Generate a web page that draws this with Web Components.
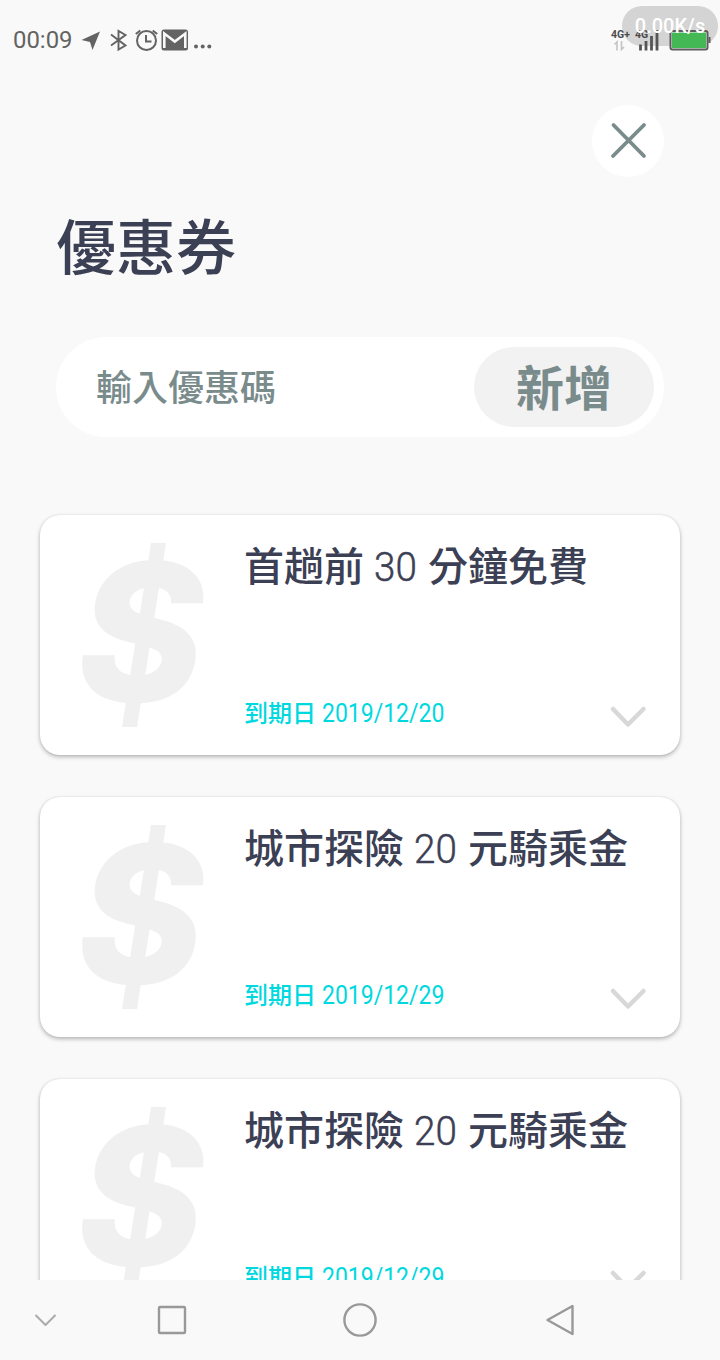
<!DOCTYPE html>
<html lang="zh-Hant">
<head>
<meta charset="utf-8">
<title>優惠券</title>
<style>
    body {
        margin: 0;
        background: #f9f9f9;
        font-family: Roboto, "Noto Sans CJK TC", sans-serif;
    }
</style>
</head>
<body>
<coupon-app></coupon-app>

<script>
// Digits set narrower than the installed face; --w is the final width, --s the squeeze
class NarrowText extends HTMLElement {

    constructor() {
        super();
        this.attachShadow({ mode: "open" }).innerHTML = `
            <style>
                :host {
                    display: inline-block;
                    width: var(--w);
                    white-space: nowrap;
                }
                span {
                    display: inline-block;
                    transform: scaleX(var(--s, 1));
                    transform-origin: left;
                }
            </style>
            <span><slot></slot></span>`;
    }
}

class StatusBar extends HTMLElement {

    constructor() {
        super();
        this.attachShadow({ mode: "open" }).innerHTML = `
            <style>
                :host {
                    display: flex;
                    justify-content: space-between;
                    position: relative;
                    height: 80px;
                    box-sizing: border-box;
                    padding: 0 9px 0 13px;
                    align-items: center;
                    color: #636363;
                }
                .left {
                    display: flex;
                    align-items: center;
                }
                svg {
                    display: block;
                    flex: none;
                }
                .time {
                    font-size: 24px;
                    line-height: 28px;
                    --w: 66px;
                    --s: .995;
                }
                .right {
                    display: flex;
                    align-items: flex-start;
                    height: 22px;
                    position: relative;
                    z-index: 1;
                }
                .net {
                    font-size: 10.5px;
                    line-height: 11px;
                    font-weight: 700;
                    color: #4c4c4c;
                    width: 24px;
                }
                .sim {
                    display: grid;
                    width: 25px;
                }
                .sim > * {
                    grid-area: 1 / 1;
                }
                .speed {
                    position: absolute;
                    left: 622px;
                    top: 6px;
                    width: 96px;
                    height: 40px;
                    border-radius: 20px;
                    background: #d4d4d4;
                }
                .rate {
                    z-index: 2;
                    background: none;
                    color: #fff;
                    font-size: 20px;
                    font-weight: 500;
                    line-height: 40px;
                    text-align: center;
                }
            </style>
            <div class="left">
                <narrow-text class="time">00:09</narrow-text>
                <svg width="126" height="28" viewBox="79 26 126 28">
                    <path d="M100 31.5L81.5 40l8.500 2 2.500 8z" fill="#636363"/>
                    <path d="M111 34.500L125.500 45.500 118.500 49.500V31L125.500 35 111 45.500" fill="none" stroke="#636363" stroke-width="1.900"/>
                    <g fill="none" stroke="#636363" stroke-width="2">
                        <circle cx="146.500" cy="40.500" r="9.500"/>
                        <path d="M146 35v6.500h5.500M135.800 34l4.500-3.500M152.700 30.500l4.500 3.500"/>
                    </g>
                    <rect x="161.500" y="29.500" width="26.500" height="21" rx="2.500" fill="#636363"/>
                    <path d="M164.300 48V33.500L174.800 41.500l10.500-8V48" fill="none" stroke="#f9f9f9" stroke-width="2.600"/>
                    <g fill="#636363">
                        <circle cx="196" cy="46.500" r="2"/>
                        <circle cx="202.700" cy="46.500" r="2"/>
                    </g>
                </svg>
                <svg width="8" height="28" viewBox="205 26 8 28">
                    <circle cx="209.300" cy="46.500" r="2" fill="#636363"/>
                </svg>
            </div>
            <div class="speed"></div>
            <div class="right">
                <div class="net">4G+
                    <svg width="14" height="11" viewBox="611 40 14 11">
                        <path d="M617 50.500V42l-2.500 2.500M621.500 41v8.500l2.500-2.500" fill="none" stroke="#c4c4c4" stroke-width="1.600"/>
                    </svg>
                </div>
                <div class="sim">
                    <svg width="25" height="22" viewBox="635 29 25 22">
                        <path d="M640.500 50.500v-6M646 50.500V41M651.500 50.500V36M657 50.500V30" fill="none" stroke="#555" stroke-width="2.800"/>
                    </svg>
                    <div class="net">4G</div>
                </div>
                <svg width="42" height="22" viewBox="669 29 42 22" style="margin-left: 9px">
                    <rect x="670.500" y="31" width="37" height="18.500" rx="2" fill="#f9f9f9" stroke="#5c5c5c" stroke-width="2"/>
                    <rect x="672" y="32.500" width="34" height="15.500" fill="#43b854"/>
                    <path d="M709.500 37v6" stroke="#5c5c5c" stroke-width="2"/>
                </svg>
            </div>
            <div class="speed rate">0.00K/s</div>`;
    }
}

class CloseButton extends HTMLElement {

    constructor() {
        super();
        this.attachShadow({ mode: "open" }).innerHTML = `
            <style>
                :host {
                    display: flex;
                    align-items: center;
                    justify-content: center;
                    width: 72px;
                    height: 72px;
                    border-radius: 50%;
                    background: #fff;
                }
            </style>
            <svg width="40" height="40" viewBox="0 0 40 40">
                <path d="M5.500 4L36 35M36 4L5 35" stroke="#7a8b8c" stroke-width="3.800" stroke-linecap="round"/>
            </svg>`;
    }
}

class CodeForm extends HTMLElement {

    constructor() {
        super();
        this.attachShadow({ mode: "open" }).innerHTML = `
            <style>
                :host {
                    display: flex;
                    align-items: center;
                    justify-content: space-between;
                    box-sizing: border-box;
                    height: 100px;
                    padding: 0 10px 0 40px;
                    border-radius: 50px;
                    background: #fff;
                    color: #7a8b8c;
                }
                .hint {
                    padding-top: 4px;
                    font-size: 36px;
                    line-height: 50px;
                    font-weight: 500;
                }
                .add {
                    width: 180px;
                    height: 80px;
                    border-radius: 40px;
                    background: #f2f2f2;
                    font-size: 48px;
                    line-height: 86px;
                    font-weight: 700;
                    text-align: center;
                }
            </style>
            <div class="hint"><slot></slot></div>
            <div class="add"><slot name="action"></slot></div>`;
    }
}

class CouponCard extends HTMLElement {

    constructor() {
        super();
        this.attachShadow({ mode: "open" }).innerHTML = `
            <style>
                :host {
                    display: grid;
                    grid-template-columns: 204px 1fr;
                    height: 240px;
                    border-radius: 20px;
                    background: #fff;
                    box-shadow: 0 2px 4px rgba(0, 0, 0, .27), 0 0 2px rgba(0, 0, 0, .1);
                    overflow: hidden;
                }
                .mark {
                    display: grid;
                    justify-items: center;
                    color: #f0f0f0;
                }
                .mark > * {
                    grid-area: 1 / 1;
                }
                .sign {
                    margin-left: -3px;
                    font: italic 800 192px/233px Inter, sans-serif;
                }
                .mark svg {
                    margin: 0;
                }
                .info {
                    display: flex;
                    flex-direction: column;
                    justify-content: space-between;
                    padding: 23px 32px 24px 0;
                }
                .name {
                    font-size: 40px;
                    line-height: 58px;
                    font-weight: 500;
                    color: #3c4055;
                    white-space: nowrap;
                }
                .foot {
                    display: flex;
                    justify-content: space-between;
                    align-items: center;
                    font-size: 24px;
                    line-height: 34px;
                    font-weight: 500;
                    color: #00d8e0;
                }
                svg {
                    display: block;
                    margin-top: 5px;
                }
            </style>
            <div class="mark">
                <svg width="204" height="240" viewBox="0 0 204 240">
                    <path d="M111 28H126L97 212H82z" fill="#f0f0f0"/>
                </svg>
                <div class="sign">$</div>
            </div>
            <div class="info">
                <div class="name"><slot></slot></div>
                <div class="foot">
                    <div><slot name="expiry"></slot></div>
                    <svg width="40" height="26" viewBox="0 0 40 26">
                        <path d="M5 5L20 20.500 35.500 5" fill="none" stroke="#d8d8d8" stroke-width="4.500" stroke-linecap="round" stroke-linejoin="round"/>
                    </svg>
                </div>
            </div>`;
    }
}

class NavBar extends HTMLElement {

    constructor() {
        super();
        this.attachShadow({ mode: "open" }).innerHTML = `
            <style>
                :host {
                    display: grid;
                    grid-template-columns: 78px 188px 188px 212px;
                    align-items: center;
                    justify-items: center;
                    height: 80px;
                    background: #f9f9f9;
                }
                svg {
                    display: block;
                    fill: none;
                    stroke: #999;
                    stroke-width: 2.400;
                    stroke-linejoin: round;
                }
            </style>
            <svg width="24" height="16" viewBox="0 0 24 16" style="margin-left: 13px; stroke: #aaa; stroke-width: 2"><path d="M1.500 3l10 10L21.500 3"/></svg>
            <svg width="32" height="32" viewBox="0 0 32 32"><rect x="3" y="3" width="26" height="26" rx="1"/></svg>
            <svg width="36" height="36" viewBox="0 0 36 36"><circle cx="18" cy="18" r="15.600"/></svg>
            <svg width="32" height="32" viewBox="0 0 32 32"><path d="M28.500 2v28L3.500 16z"/></svg>`;
    }
}

class CouponApp extends HTMLElement {

    constructor() {
        super();
        this.attachShadow({ mode: "open" }).innerHTML = `
            <style>
                :host {
                    display: flex;
                    flex-direction: column;
                    width: 720px;
                    height: 1360px;
                    overflow: hidden;
                }
                main {
                    flex: 1;
                    min-height: 0;
                    overflow: hidden;
                }
                header {
                    display: flex;
                    flex-direction: column;
                    padding: 25px 56px 0;
                }
                close-button {
                    align-self: flex-end;
                }
                h1 {
                    margin: 29px 0 43px;
                    font-size: 60px;
                    line-height: 88px;
                    font-weight: 500;
                    color: #3c4055;
                }
                .list {
                    display: flex;
                    flex-direction: column;
                    gap: 42px;
                    padding: 78px 40px 0;
                }
                .amount {
                    font-size: 41px;
                    font-weight: 300;
                    -webkit-text-stroke: .5px;
                    --w: 44px;
                    --s: .94;
                }
                .date {
                    font-size: 25px;
                    font-weight: 400;
                    --w: 124px;
                    --s: .92;
                }
            </style>
            <status-bar></status-bar>
            <main>
                <header>
                    <close-button></close-button>
                    <h1>優惠券</h1>
                    <code-form>輸入優惠碼<span slot="action">新增</span></code-form>
                </header>
                <div class="list">
                    <coupon-card>首趟前 <narrow-text class="amount">30</narrow-text> 分鐘免費<span slot="expiry">到期日 <narrow-text class="date">2019/12/20</narrow-text></span></coupon-card>
                    <coupon-card>城市探險 <narrow-text class="amount">20</narrow-text> 元騎乘金<span slot="expiry">到期日 <narrow-text class="date">2019/12/29</narrow-text></span></coupon-card>
                    <coupon-card>城市探險 <narrow-text class="amount">20</narrow-text> 元騎乘金<span slot="expiry">到期日 <narrow-text class="date">2019/12/29</narrow-text></span></coupon-card>
                </div>
            </main>
            <nav-bar></nav-bar>`;
    }
}

customElements.define("narrow-text", NarrowText);
customElements.define("status-bar", StatusBar);
customElements.define("close-button", CloseButton);
customElements.define("code-form", CodeForm);
customElements.define("coupon-card", CouponCard);
customElements.define("nav-bar", NavBar);
customElements.define("coupon-app", CouponApp);
</script>
</body>
</html>
